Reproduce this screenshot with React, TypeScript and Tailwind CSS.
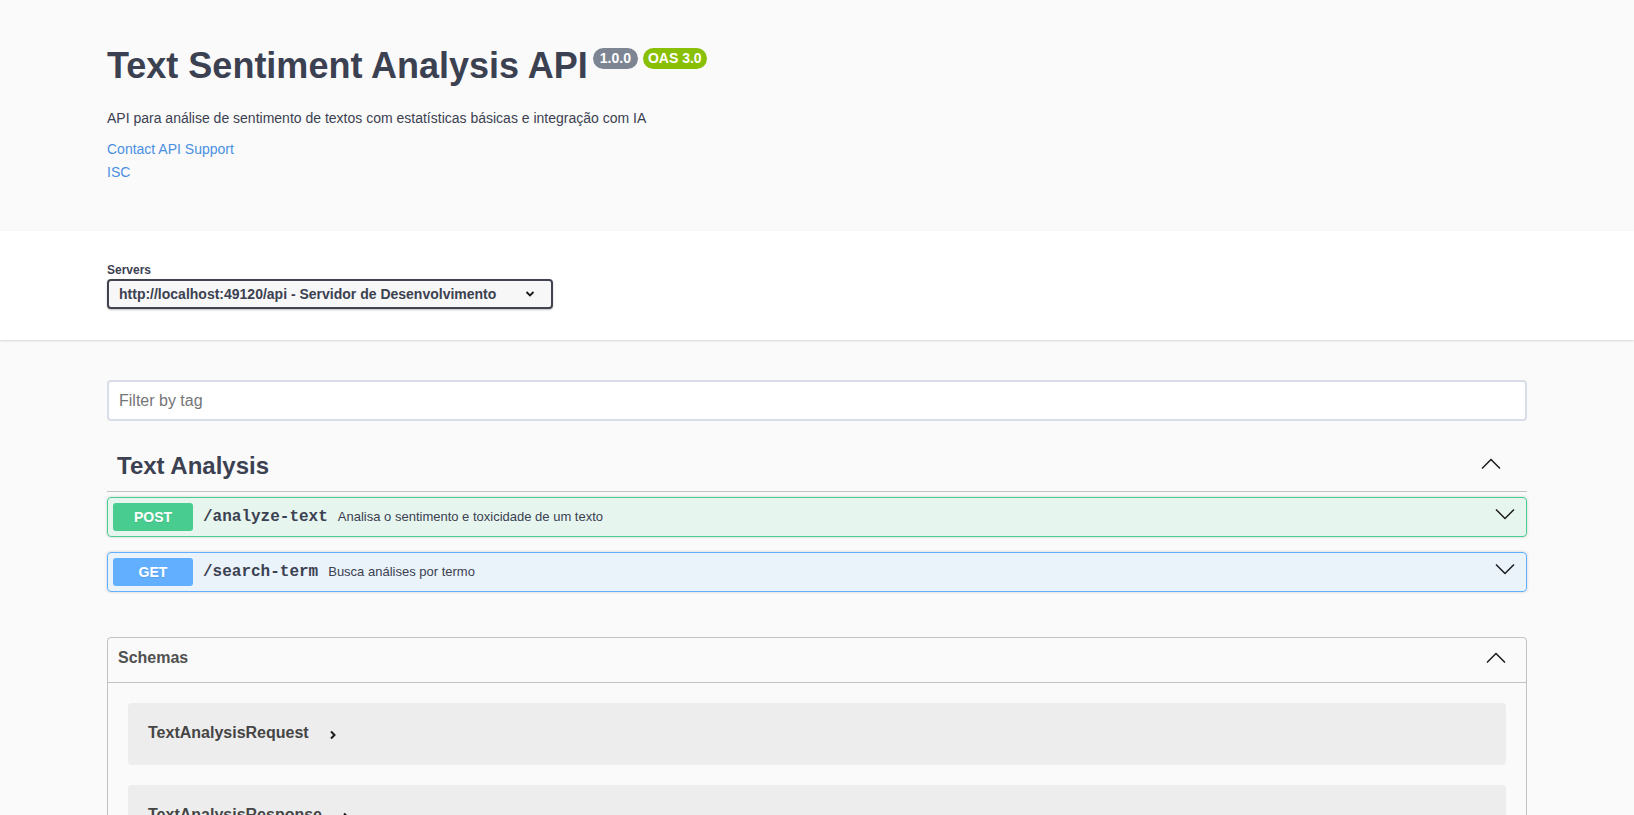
import React from 'react';

const sans = "font-['Liberation_Sans',Arial,sans-serif]";
const mono = "font-['Liberation_Mono','Courier_New',monospace]";

const operations = [
  {
    method: 'POST',
    path: '/analyze-text',
    summary: 'Analisa o sentimento e toxicidade de um texto',
    block: 'border-[#49cc90] bg-[#49cc90]/10',
    badge: 'bg-[#49cc90]',
  },
  {
    method: 'GET',
    path: '/search-term',
    summary: 'Busca análises por termo',
    block: 'border-[#61affe] bg-[#61affe]/10',
    badge: 'bg-[#61affe]',
  },
];

const schemas = ['TextAnalysisRequest', 'TextAnalysisResponse'];

function ChevronUp({ y1 = 3.5, y2 = 12.5 }: { y1?: number; y2?: number }) {
  return (
    <svg width="20" height="20" viewBox="0 0 20 20" className="shrink-0">
      <polyline points={`1,${y2} 10,${y1} 19,${y2}`} fill="none" stroke="#1a1a1a" strokeWidth="1.5" />
    </svg>
  );
}

function ChevronDown() {
  return (
    <svg width="20" height="20" viewBox="0 0 20 20" className="shrink-0">
      <polyline points="1,2.5 10,11.5 19,2.5" fill="none" stroke="#1a1a1a" strokeWidth="1.5" />
    </svg>
  );
}

export default function App() {
  return (
    <div className={`min-h-screen bg-[#fafafa] text-[#3b4151] ${sans}`}>
      {/* info header */}
      <div className="mx-auto max-w-[1460px] px-5 pt-[45px] pb-[49px]">
        <div className="flex items-start">
          <h2 className="text-[36px] font-bold leading-[41px]">Text Sentiment Analysis API</h2>
          <span className="ml-[5px] mt-[3px] rounded-full bg-[#7d8492] px-[7px] py-[3px] text-[14px] font-bold leading-[15px] text-white">
            1.0.0
          </span>
          <span className="ml-[5px] mt-[3px] rounded-full bg-[#89bf04] px-[5px] py-[3px] text-[14px] font-bold leading-[15px] text-white">
            OAS 3.0
          </span>
        </div>
        <p className="mt-[22px] text-[14px] leading-[20px]">
          API para análise de sentimento de textos com estatísticas básicas e integração com IA
        </p>
        <div className="mt-[11px] flex flex-col gap-[3px] text-[14px] leading-[20px] text-[#4990e2]">
          <a href="#" className="w-fit">Contact API Support</a>
          <a href="#" className="w-fit">ISC</a>
        </div>
      </div>

      {/* servers */}
      <div className="bg-white shadow-[0_1px_2px_0_rgba(0,0,0,0.15)]">
        <div className="mx-auto max-w-[1460px] px-5 pt-[32px] pb-[31px]">
          <p className="text-[12px] font-bold leading-[14px]">Servers</p>
          <div className="mt-[2px] flex h-[30px] w-[446px] items-center justify-between rounded-[4px] border-2 border-[#41444e] bg-[#f7f7f7] pl-[10px] pr-[16px] shadow-[0_1px_2px_0_rgba(0,0,0,0.25)]">
            <span className="text-[14px] font-bold text-[#3b4151]">
              http://localhost:49120/api - Servidor de Desenvolvimento
            </span>
            <svg width="10" height="8" viewBox="0 0 10 8">
              <polyline points="1.5,2 5,5.5 8.5,2" fill="none" stroke="#1a1a1a" strokeWidth="1.8" />
            </svg>
          </div>
        </div>
      </div>

      <div className="mx-auto max-w-[1460px] px-5 pt-[40px]">
        <input
          type="text"
          placeholder="Filter by tag"
          className="block h-[41px] w-full rounded-[4px] border-2 border-[#d8dde7] bg-white px-[10px] text-[16px] outline-none placeholder:text-[#757575]"
        />

        {/* tag */}
        <div className="mt-[20px] flex h-[51px] items-center border-b border-[#3b4151]/30 pl-[10px] pr-[26px]">
          <h3 className="flex-1 text-[24px] font-bold">Text Analysis</h3>
          <ChevronUp />
        </div>

        <div className="mt-[5px] flex flex-col gap-[15px]">
          {operations.map((op) => (
            <div
              key={op.path}
              className={`flex h-[40px] items-center rounded-[4px] border p-[5px] shadow-[0_0_3px_rgba(0,0,0,0.19)] ${op.block}`}
            >
              <span
                className={`w-[80px] rounded-[3px] py-[6px] text-center text-[14px] font-bold leading-[16px] text-white [text-shadow:0_1px_0_rgba(0,0,0,0.1)] ${op.badge}`}
              >
                {op.method}
              </span>
              <span className={`px-[10px] text-[16px] font-bold text-[#3b4151] ${mono}`}>{op.path}</span>
              <span className="flex-1 text-[13px]">{op.summary}</span>
              <span className="mr-[6px]">
                <ChevronDown />
              </span>
            </div>
          ))}
        </div>

        {/* schemas */}
        <div className="mt-[45px] rounded-[4px] border border-[#3b4151]/30 pb-[20px]">
          <div className="flex h-[45px] items-center border-b border-[#3b4151]/30 pb-[5px] pl-[10px] pr-[20px]">
            <h4 className="flex-1 text-[16px] font-bold text-[#505050]">Schemas</h4>
            <ChevronUp y1={5.5} y2={14.5} />
          </div>
          {schemas.map((name) => (
            <div key={name} className="mx-[20px] mt-[20px] flex h-[62px] items-center rounded-[4px] bg-black/5 pb-[2px] pl-[20px]">
              <span className="text-[16px] font-bold text-[#454545]">{name}</span>
              <svg width="8" height="10" viewBox="0 0 8 10" className="ml-[20px] mt-[3px]">
                <polyline points="2,1.5 5.5,5 2,8.5" fill="none" stroke="#1a1a1a" strokeWidth="2" />
              </svg>
            </div>
          ))}
        </div>
      </div>
    </div>
  );
}
